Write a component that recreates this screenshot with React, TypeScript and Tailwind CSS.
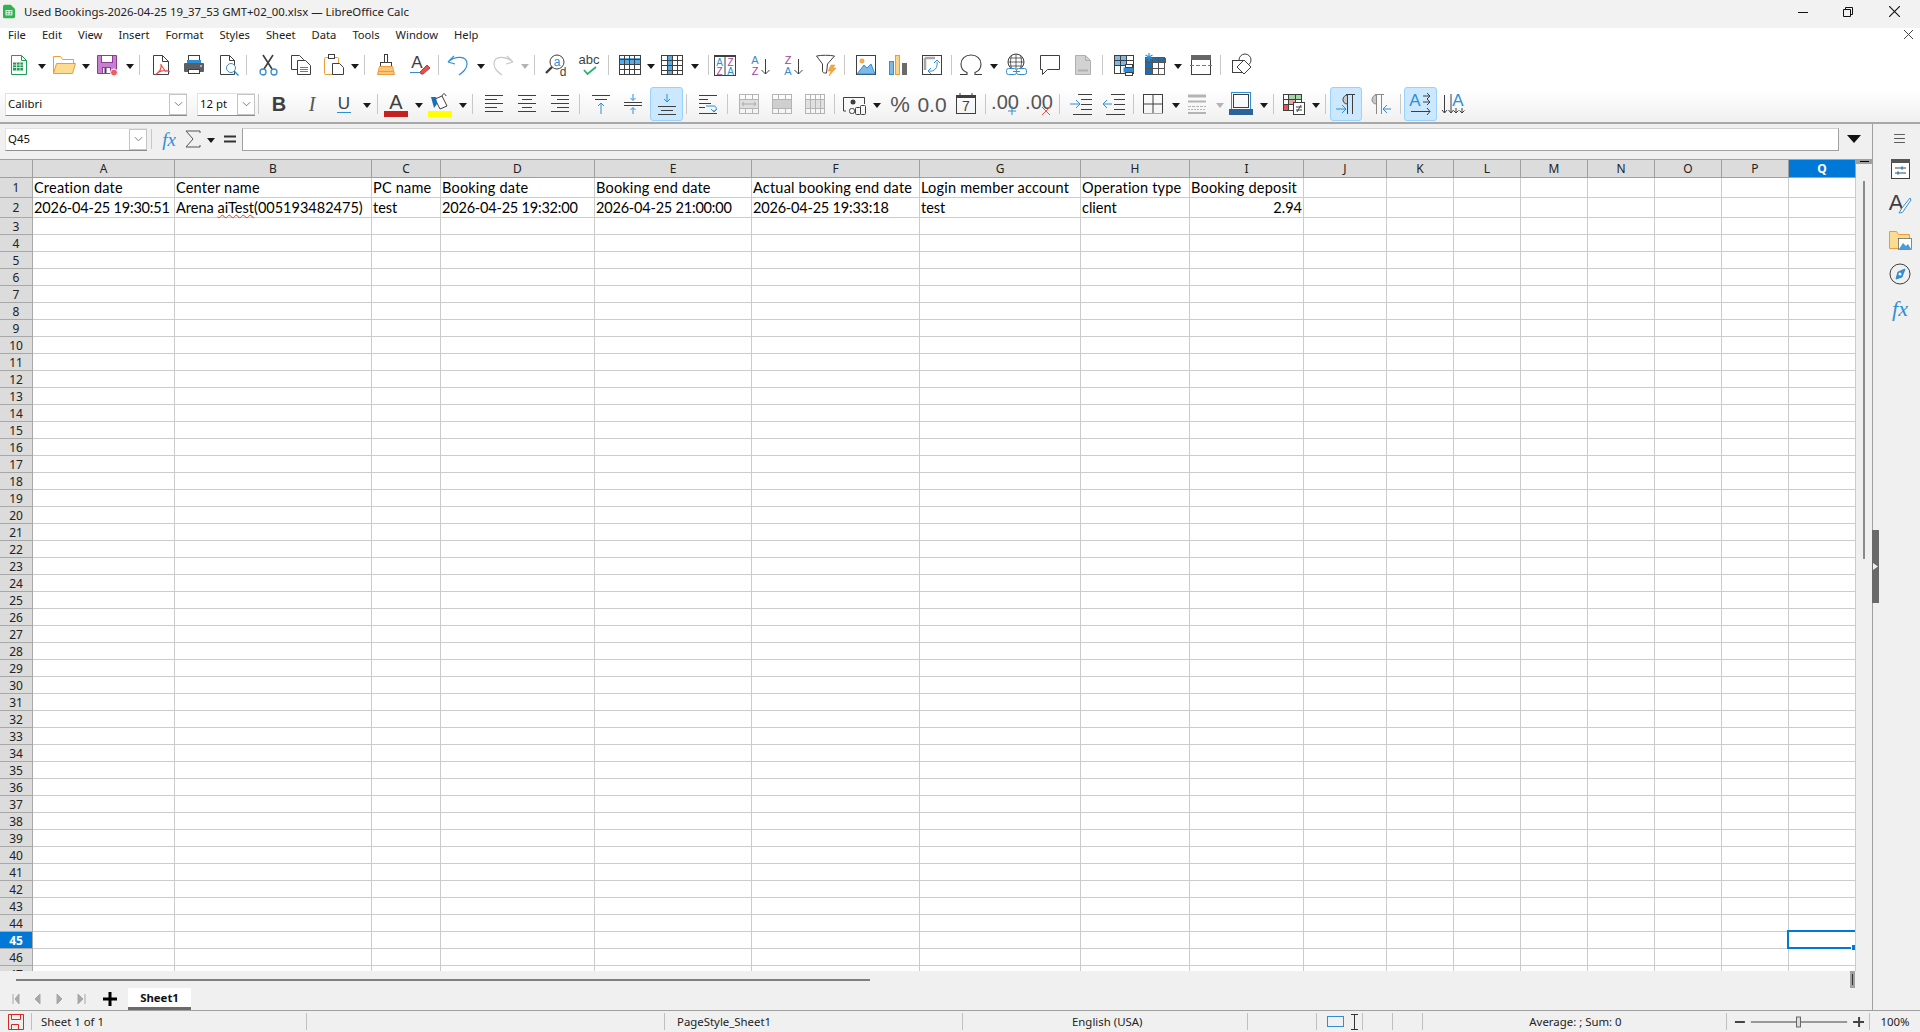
import React from "react";

const UI = "font-['Noto_Sans','Open_Sans',sans-serif]";
const COLS = ["A", "B", "C", "D", "E", "F", "G", "H", "I", "J", "K", "L", "M", "N", "O", "P", "Q"];
const BLUE = "#2f8fd6";
const DARK = "#3f3f3f";
const PURPLE = "#a53fa5";
const ORANGE = "#ee9b3a";
const LETTERS = "Liberation Sans, sans-serif";

const ROW1 = ["Creation date", "Center name", "PC name", "Booking date", "Booking end date", "Actual booking end date", "Login member account", "Operation type", "Booking deposit"];
const ROW2 = ["2026-04-25 19:30:51", "", "test", "2026-04-25 19:32:00", "2026-04-25 21:00:00", "2026-04-25 19:33:18", "test", "client", ""];

function Ic({ className = "", children }: { className?: string; children?: React.ReactNode }) {
  return (
    <svg viewBox="0 0 24 24" fill="none" stroke={DARK} className={"w-[24px] h-[24px] shrink-0 overflow-visible " + className}>
      {children}
    </svg>
  );
}

// little black arrow next to a tool button
function Dd({ className = "", off }: { className?: string; off?: boolean }) {
  return (
    <svg viewBox="0 0 8 5" className={"w-[8px] h-[5px] shrink-0 mt-[2px] " + className}>
      <path d="M0 0h8L4 5z" fill={off ? "#b4b4b4" : "#1a1a1a"} />
    </svg>
  );
}

function Sep({ className = "" }: { className?: string }) {
  return <div className={"w-[1px] h-[20px] bg-[#c8c8c8] shrink-0 " + className} />;
}

function L({ x, y, s = 9, c = DARK, w = 400, a = "middle", i }: { x: number; y: number; s?: number; c?: string; w?: number; a?: "middle" | "start"; i?: string; }) {
  return (
    <text x={x} y={y} fontSize={s} fill={c} stroke="none" fontWeight={w} textAnchor={a} fontFamily={LETTERS}>
      {i}
    </text>
  );
}

function Lines({ rows }: { rows: [number, number, number][] }) {
  return <path d={rows.map(([x1, x2, y]) => `M${x1} ${y}.5H${x2}`).join("")} />;
}

function Grid({ x = 1.5, y = 2.5, w = 21, h = 19, vs, hs, c = DARK }: { x?: number; y?: number; w?: number; h?: number; vs: number[]; hs: number[]; c?: string }) {
  return (
    <>
      <rect x={x} y={y} width={w} height={h} stroke={c} />
      <path d={vs.map((v) => `M${v} ${y}v${h}`).join("") + hs.map((v) => `M${x} ${v}h${w}`).join("")} stroke={c} />
    </>
  );
}

function ComboArrow() {
  return (
    <div className="w-[18px] h-full flex items-center justify-center bg-white border border-[#c4c4c4] shrink-0">
      <svg viewBox="0 0 10 6" className="w-[9px] h-[6px]">
        <path d="M1 1l4 4 4-4" fill="none" stroke="#707070" />
      </svg>
    </div>
  );
}

function Toolbar1() {
  return (
    <div className="h-[38px] flex items-center">
      <Ic className="ml-[7px]">
        <path d="M4.5 2.5h10l5 5v14h-15z" stroke="#1f9d55" fill="#fff" />
        <path d="M14.5 2.5v5h5" stroke="#1f9d55" />
        <rect x="6" y="9.5" width="10" height="8" fill="#1f9d55" stroke="none" />
        <path d="M6 12h10M6 14.5h10M9.5 9.5v8M13 9.5v8" stroke="#fff" strokeWidth=".7" />
      </Ic>
      <Dd className="ml-[7px]" />
      <Ic className="ml-[6px]">
        <path d="M1.5 20.5v-17h7l2 3h11v4" fill="#fff" stroke={ORANGE} />
        <path d="M1.5 20.5l3-10h19l-3 10z" fill="#fcdc90" stroke={ORANGE} />
      </Ic>
      <Dd className="ml-[6px]" />
      <Ic className="ml-[5px]">
        <path d="M2.5 2.5h19v18h-19z" fill="#c77fd0" stroke="#8d3c98" />
        <rect x="6.5" y="2.5" width="11" height="7" fill="#fff" stroke="#8d3c98" />
        <rect x="7.5" y="14.5" width="8" height="6" fill="#fff" stroke="#8d3c98" />
        <path d="M10.5 15v5" stroke="#5d2d64" strokeWidth="2" />
        <circle cx="19" cy="19.5" r="3.5" fill="#ef5f5f" stroke="#fff" />
      </Ic>
      <Dd className="ml-[7px]" />
      <Sep className="ml-[5px]" />
      <Ic className="ml-[9px]">
        <path d="M4.5 2.5h9l6 6v13h-15z" fill="#fff" />
        <path d="M13.5 2.5v6h6" />
        <path d="M12 11c1 5-1 8-6 11M10 19c4-2 7-2 11 0M12 12l5 7" stroke="#ea4a4a" strokeWidth="1.2" />
      </Ic>
      <Ic className="ml-[9px]">
        <rect x="6.5" y="2.5" width="11" height="7" fill="#fff" />
        <rect x="2" y="10" width="20" height="9" rx="1" fill="#5b5f63" stroke="none" />
        <rect x="5" y="7" width="14" height="3" fill={BLUE} stroke="none" />
        <rect x="6.5" y="16.5" width="11" height="4" fill="#fff" />
        <path d="M18 13h2" stroke="#fff" />
      </Ic>
      <Ic className="ml-[10px]">
        <path d="M4.5 2.5h9l5 5v14h-14z" fill="#fff" />
        <path d="M13.5 2.5v5h5" />
        <circle cx="15" cy="15" r="4.5" stroke={BLUE} fill="#fff" />
        <path d="M18.5 18.5l4 4" stroke={BLUE} strokeWidth="1.5" />
      </Ic>
      <Sep className="ml-[6px]" />
      <Ic className="ml-[9px]">
        <path d="M7 2l9 14M17 2L8 16" strokeWidth="1.6" />
        <circle cx="7" cy="19" r="3" stroke={BLUE} strokeWidth="1.3" />
        <circle cx="18" cy="19" r="3" stroke={BLUE} strokeWidth="1.3" />
      </Ic>
      <Ic className="ml-[9px]">
        <path d="M2.5 2.5h8l4 4v10h-12z" fill="#fff" />
        <path d="M8.5 7.5h8l5 5v9h-13z" fill="#fff" />
        <path d="M11 14.5h8M11 16.5h8M11 18.5h8" stroke={BLUE} />
      </Ic>
      <Ic className="ml-[9px]">
        <rect x="2.5" y="4.5" width="14" height="17" rx="1" stroke={ORANGE} />
        <rect x="6.5" y="1.5" width="6" height="4" fill="#fff" />
        <path d="M10.5 10.5h7l4 4v7h-11z" fill="#fff" />
      </Ic>
      <Dd className="ml-[5px]" />
      <Sep className="ml-[5px]" />
      <Ic className="ml-[9px]">
        <rect x="10.5" y="1.5" width="3" height="8" fill="#fff" />
        <rect x="6.5" y="9.5" width="11" height="4" fill="#fff" />
        <path d="M5.5 13.5h13l2 8h-17z" fill="#f9c678" stroke={ORANGE} />
        <path d="M4.5 18.5h15" stroke={ORANGE} />
      </Ic>
      <Ic className="ml-[9px]">
        <L x={10} y={15} s={17} i="A" />
        <path d="M3 19.5h10" stroke={BLUE} />
        <path d="M13 19l7-7 3 3-7 6h-2z" fill="#e8504a" stroke="#c73a36" />
      </Ic>
      <Sep className="ml-[7px]" />
      <Ic className="ml-[7px]">
        <path d="M2 9l6-6M2 9l7 2M2 9c7-6 19-7 19 2 0 5-4 8-8 11" stroke={BLUE} strokeWidth="1.2" />
      </Ic>
      <Dd className="ml-[7px]" />
      <Ic className="ml-[6px]">
        <path d="M22 9l-6-6M22 9l-7 2M22 9C15 3 3 2 3 11c0 5 4 8 8 11" stroke="#c8c8c8" strokeWidth="1.2" />
      </Ic>
      <Dd className="ml-[6px]" off />
      <Sep className="ml-[5px]" />
      <Ic className="ml-[9px]">
        <circle cx="13" cy="9" r="7" />
        <L x={13} y={13} s={12} c={BLUE} i="a" />
        <path d="M8 14l-6 6" strokeWidth="2.4" />
        <L x={19} y={23} s={12} i="d" />
      </Ic>
      <Ic className="ml-[9px]">
        <L x={12} y={11} s={13} i="abc" />
        <path d="M7 17l3.5 4L19 14" stroke="#27b36e" strokeWidth="1.8" />
      </Ic>
      <Sep className="ml-[7px]" />
      <Ic className="ml-[9px]">
        <rect x="2" y="5" width="21" height="6" fill="#5aa9e0" stroke="none" />
        <Grid x={1.5} y={2.5} w={21} h={19} vs={[6.5, 11.5, 16.5]} hs={[6.5, 11.5, 16.5]} />
      </Ic>
      <Dd className="ml-[5px]" />
      <Ic className="ml-[5px]">
        <rect x="7" y="3" width="6" height="18" fill="#5aa9e0" stroke="none" />
        <Grid x={1.5} y={2.5} w={21} h={19} vs={[7.5, 12.5, 17.5]} hs={[7.5, 12.5, 17.5]} />
      </Ic>
      <Dd className="ml-[7px]" />
      <Sep className="ml-[9px]" />
      <Ic className="ml-[4px]">
        <rect x="1.5" y="3.5" width="21" height="19" />
        <rect x="1" y="2" width="22" height="2" fill={DARK} stroke="none" />
        <path d="M12 4v18" />
        <L x={6.5} y={13} s={10} c={BLUE} i="A" />
        <L x={6.5} y={22} s={10} c={PURPLE} i="Z" />
        <L x={17.5} y={13} s={10} c={PURPLE} i="Z" />
        <L x={17.5} y={22} s={10} c={BLUE} i="A" />
      </Ic>
      <Ic className="ml-[11px]">
        <L x={7} y={11} s={11} c={BLUE} i="A" />
        <L x={7} y={22} s={11} c={PURPLE} i="Z" />
        <path d="M17.5 6v15M13.5 17l4 4 4-4" />
      </Ic>
      <Ic className="ml-[9px]">
        <L x={7} y={11} s={11} c={PURPLE} i="Z" />
        <L x={7} y={22} s={11} c={BLUE} i="A" />
        <path d="M17.5 6v15M13.5 17l4 4 4-4" />
      </Ic>
      <Ic className="ml-[9px]">
        <path d="M2.5 3c5-1 13-1 18 0l-7 8-1 9h-2c-1 0-2-1-2-2v-7z" />
        <path d="M17 12l-3 6h3l-2 5 7-8h-3l2-3z" fill="#f3a93c" stroke="#e98f2a" strokeWidth=".5" />
      </Ic>
      <Sep className="ml-[6px]" />
      <Ic className="ml-[9px]">
        <rect x="2.5" y="2.5" width="19" height="19" />
        <circle cx="8" cy="8" r="2" fill="#f6b458" stroke={ORANGE} />
        <path d="M3 21l7-9 3 3 4-4 4 10z" fill="#7db9e6" stroke={BLUE} />
      </Ic>
      <Ic className="ml-[8px]">
        <rect x="3.5" y="8.5" width="4" height="13" fill="#7db9e6" stroke={BLUE} />
        <rect x="9.5" y="2.5" width="4" height="19" fill="#fbd48a" stroke={ORANGE} />
        <rect x="16" y="10" width="5" height="12" fill="#6a6a6a" stroke="none" />
      </Ic>
      <Ic className="ml-[10px]">
        <rect x="2.5" y="2.5" width="19" height="19" />
        <path d="M5 5h10M5 5v12" stroke="#a8a8a8" strokeWidth="2.5" />
        <path d="M9 18c5 1 9-3 8-9M14 10l3-3 3 3M11 15l-3 3 3 3" stroke={BLUE} />
      </Ic>
      <Sep className="ml-[7px]" />
      <Ic className="ml-[7px]">
        <path d="M1 21.5h7v-2C4 18 2 15 2 11c0-5 4-9 10-9s10 4 10 9c0 4-2 7-6 8.500v2h7" strokeWidth="1.1" />
      </Ic>
      <Dd className="ml-[7px]" />
      <Ic className="ml-[7px]">
        <circle cx="11" cy="9" r="8" />
        <path d="M3 9h16M4.500 5h13M4.500 13h13M11 1v16M7 2c-2 4-2 10 0 14M15 2c2 4 2 10 0 14" strokeWidth=".8" />
        <rect x="1.500" y="15.500" width="10" height="6" rx="2" stroke={BLUE} fill="#fff" />
        <rect x="11.500" y="15.500" width="10" height="6" rx="2" stroke={BLUE} fill="#fff" />
        <path d="M8 18.500h7" stroke={BLUE} />
      </Ic>
      <Ic className="ml-[9px]">
        <path d="M2.500 2.500h19v14h-12l-5 5v-5h-2z" fill="#fff" />
      </Ic>
      <Ic className="ml-[9px]">
        <path d="M4.500 2.500h10l5 5v14h-15z" fill="#d2d2d2" stroke="#b0b0b0" />
        <path d="M14.500 2.500v5h5" stroke="#b0b0b0" />
        <path d="M7 17.500h10" stroke="#b0b0b0" strokeWidth="2" />
      </Ic>
      <Sep className="ml-[7px]" />
      <Ic className="ml-[9px]">
        <rect x="3" y="3" width="11" height="10" fill="#7db9e6" stroke="none" />
        <Grid x={2.500} y={2.500} w={19} h={18} vs={[8.500, 14.500]} hs={[7.500, 12.500]} />
        <rect x="11.500" y="14.500" width="10" height="5" fill="#2f8fd6" stroke="none" />
        <rect x="13.500" y="11.500" width="7" height="3" fill="#fff" />
        <rect x="13.500" y="19.500" width="7" height="3" fill="#fff" />
      </Ic>
      <Ic className="ml-[7px]">
        <rect x="2" y="4" width="21" height="18" fill="#fff" stroke="none" />
        <rect x="2" y="5" width="8" height="17" fill="#1a6eb5" stroke="none" />
        <rect x="2" y="5" width="21" height="5" fill="#1a6eb5" stroke="none" />
        <Grid x={2.500} y={4.500} w={19} h={17} vs={[9.500, 15.500]} hs={[9.500, 15.500]} c="#555" />
        <path d="M6 0v8M2.500 2l7 4M9.500 2l-7 4" stroke="#2f8fd6" strokeWidth="1.200" />
      </Ic>
      <Dd className="ml-[7px]" />
      <Ic className="ml-[7px]">
        <rect x="2.500" y="2.500" width="19" height="19" />
        <rect x="2" y="2" width="20" height="5" fill="#666" stroke="none" />
        <path d="M1 12.500h22" stroke={BLUE} strokeDasharray="4 2" />
      </Ic>
      <Sep className="ml-[7px]" />
      <Ic className="ml-[9px]">
        <circle cx="15" cy="7" r="6" />
        <rect x="2.500" y="7.500" width="12" height="12" fill="#fff" />
        <path d="M14 7l7 7-7 7-7-7z" fill="#fff" />
      </Ic>
    </div>
  );
}

function Hl({ className = "", children }: { className?: string; children?: React.ReactNode }) {
  return (
    <div className={"h-[34px] flex items-center justify-center bg-[#cce8ff] border border-[#99d1ff] rounded-[3px] shrink-0 " + className}>
      {children}
    </div>
  );
}

function Toolbar2() {
  return (
    <div className="h-[38px] pt-[2px] flex items-center">
      <div className="ml-[5px] w-[182px] h-[23px] flex items-center bg-white border-t border-l border-[#e2e2e2] border-b-[#8c8c8c] border-b shrink-0">
        <span className={"flex-1 pl-[2px] text-[11.4px] text-[#111] " + UI}>Calibri</span>
        <ComboArrow />
      </div>
      <div className="ml-[10px] w-[58px] h-[23px] flex items-center bg-white border-t border-l border-[#e2e2e2] border-b-[#8c8c8c] border-b shrink-0">
        <span className={"flex-1 pl-[2px] text-[11.4px] text-[#111] " + UI}>12 pt</span>
        <ComboArrow />
      </div>
      <Sep className="ml-[3px]" />
      <Ic className="ml-[8px]">
        <L x={12} y={19} s={20} w={700} i="B" />
      </Ic>
      <Ic className="ml-[9px]">
        <text x="12" y="19" fontSize="20" fontStyle="italic" textAnchor="middle" fill="#555" stroke="none" fontFamily="Liberation Serif, serif">I</text>
      </Ic>
      <Ic className="ml-[8px]">
        <L x={12} y={17} s={17} i="U" />
        <path d="M5 20.500h14" stroke={BLUE} />
      </Ic>
      <Dd className="ml-[7px]" />
      <Sep className="ml-[6px]" />
      <Ic className="ml-[6px]">
        <L x={12} y={17} s={20} i="A" />
        <rect x="0" y="19" width="24" height="6" fill="#c8201f" stroke="none" />
      </Ic>
      <Dd className="ml-[7px]" />
      <Ic className="ml-[5px]">
        <path d="M7 7l7-3 5 10-7 3z" fill="#fff" />
        <path d="M3 5h5l1 7-3 4z" fill="#1a6eb5" stroke="none" />
        <path d="M14 4c1-3 3-3 4 0" />
        <rect x="0" y="19" width="24" height="6" fill="#ffff00" stroke="none" />
      </Ic>
      <Dd className="ml-[7px]" />
      <Sep className="ml-[5px]" />
      <Ic className="ml-[9px]">
        <Lines rows={[[3, 21, 3], [3, 15, 7], [3, 21, 11], [3, 15, 15], [3, 21, 19]]} />
      </Ic>
      <Ic className="ml-[9px]">
        <Lines rows={[[3, 21, 3], [7, 17, 7], [3, 21, 11], [7, 17, 15], [3, 21, 19]]} />
      </Ic>
      <Ic className="ml-[9px]">
        <Lines rows={[[3, 21, 3], [9, 21, 7], [3, 21, 11], [9, 21, 15], [3, 21, 19]]} />
      </Ic>
      <Sep className="ml-[7px]" />
      <Ic className="ml-[9px]">
        <Lines rows={[[3, 21, 3], [6, 18, 7]]} />
        <path d="M12 22V11M9 14l3-3 3 3" stroke={BLUE} />
      </Ic>
      <Ic className="ml-[8px]">
        <Lines rows={[[3, 21, 10], [3, 21, 13]]} />
        <path d="M12 2v6M9.500 6l2.500 2.500L14.500 6M12 22v-6M9.500 18l2.500-2.500 2.500 2.500" stroke={BLUE} />
      </Ic>
      <Hl className="ml-[5px] w-[33px]">
        <Ic>
          <path d="M12 2v8M9 7l3 3 3-3" stroke={BLUE} />
          <Lines rows={[[3, 21, 14], [6, 18, 18], [3, 21, 22]]} />
        </Ic>
      </Hl>
      <Sep className="ml-[3px]" />
      <Ic className="ml-[9px]">
        <Lines rows={[[3, 21, 3], [3, 12, 7], [3, 15, 11], [3, 9, 15], [3, 21, 21]]} />
        <path d="M10 14h8c3 0 3 5 0 5h-1M15 17l3 3 3-3" stroke={BLUE} />
      </Ic>
      <Sep className="ml-[7px]" />
      <Ic className="ml-[9px]">
        <Grid x={2.500} y={2.500} w={19} h={19} vs={[8.500, 15.500]} hs={[7.500, 16.500]} c="#b4b4b4" />
        <rect x="3" y="8" width="18" height="8" fill="#dedede" stroke="none" />
        <path d="M5 12h14M5 12l2-2M5 12l2 2M19 12l-2-2M19 12l-2 2" stroke="#aaa" />
      </Ic>
      <Ic className="ml-[9px]">
        <Grid x={2.500} y={2.500} w={19} h={19} vs={[8.500, 15.500]} hs={[7.500, 16.500]} c="#b4b4b4" />
        <rect x="3" y="8" width="18" height="8" fill="#cfcfcf" stroke="none" />
      </Ic>
      <Ic className="ml-[9px]">
        <rect x="3" y="8" width="18" height="8" fill="#e0e0e0" stroke="none" />
        <Grid x={2.500} y={2.500} w={19} h={19} vs={[7.500, 12.500, 17.500]} hs={[7.500, 16.500]} c="#b4b4b4" />
      </Ic>
      <Sep className="ml-[7px]" />
      <Ic className="ml-[7px]">
        <path d="M4 19H1.500V5.500h21V12" />
        <circle cx="11" cy="10" r="2.500" fill={DARK} stroke="none" />
        <rect x="7.500" y="16.500" width="5" height="5" rx="2" />
        <rect x="13.500" y="15.500" width="5" height="7" rx="1" />
        <rect x="18.500" y="13.500" width="5" height="9" rx="1" />
      </Ic>
      <Dd className="ml-[7px]" />
      <Ic className="ml-[7px]">
        <L x={12} y={20} s={22} c="#555" i="%" />
      </Ic>
      <Ic className="ml-[8px]">
        <L x={12} y={20} s={21} c="#555" i="0.0" />
      </Ic>
      <Ic className="ml-[10px]">
        <rect x="2.500" y="3.500" width="19" height="18" />
        <rect x="2" y="3" width="20" height="3" fill={DARK} stroke="none" />
        <path d="M6 1v3M18 1v3" />
        <L x={12} y={19} s={14} i="7" />
      </Ic>
      <Sep className="ml-[7px]" />
      <Ic className="ml-[8px]">
        <L x={11} y={17} s={20} c="#555" i=".00" />
        <path d="M18 14v9M14 19h8" stroke={BLUE} />
      </Ic>
      <Ic className="ml-[10px]">
        <L x={11} y={17} s={20} c="#555" i=".00" />
        <path d="M14 15l8 8M22 15l-8 8" stroke="#f05050" />
      </Ic>
      <Sep className="ml-[7px]" />
      <Ic className="ml-[9px]">
        <Lines rows={[[9, 23, 2], [12, 23, 7], [12, 23, 12], [12, 23, 17], [4, 23, 22]]} />
        <path d="M1 12h9M7 8l4 4-4 4" stroke={BLUE} />
      </Ic>
      <Ic className="ml-[9px]">
        <Lines rows={[[9, 23, 2], [12, 23, 7], [12, 23, 12], [12, 23, 17], [4, 23, 22]]} />
        <path d="M10 12H1M5 8l-4 4 4 4" stroke={BLUE} />
      </Ic>
      <Sep className="ml-[7px]" />
      <Ic className="ml-[7px]">
        <rect x="2.500" y="2.500" width="19" height="19" />
        <path d="M12 2.500v19M2.500 12h19" />
        <path d="M2 21.500h20" stroke={ORANGE} />
      </Ic>
      <Dd className="ml-[7px]" />
      <Ic className="ml-[5px]">
        <path d="M3 4h18" stroke="#b4b4b4" strokeWidth="3" />
        <path d="M3 9.500h18" stroke="#b4b4b4" strokeWidth="2" />
        <path d="M3 14.500h18" stroke="#b4b4b4" strokeDasharray="3 1" />
        <path d="M3 17.500h18" stroke="#b4b4b4" strokeDasharray="2 1" />
        <path d="M3 21h18" stroke="#b4b4b4" strokeWidth="2" />
      </Ic>
      <Dd className="ml-[7px]" off />
      <Ic className="ml-[5px]">
        <rect x="2.500" y="0.500" width="19" height="17" stroke={BLUE} />
        <rect x="4.500" y="2.500" width="15" height="13" />
        <rect x="0" y="17" width="24" height="6" fill="#2b6299" stroke="none" />
      </Ic>
      <Dd className="ml-[7px]" />
      <Sep className="ml-[5px]" />
      <Ic className="ml-[8px]">
        <rect x="6" y="2" width="13" height="5" fill="#9fd8a5" stroke="none" />
        <rect x="6" y="7" width="8" height="5" fill="#f1a0a0" stroke="none" />
        <rect x="2" y="12" width="5" height="6" fill="#f05050" stroke="none" />
        <Grid x={1.500} y={2.500} w={18} h={16} vs={[6.500, 13.500]} hs={[7.500, 12.500]} />
        <rect x="11.500" y="10.500" width="11" height="12" fill="#fff" />
        <path d="M14 15h6M14 18h6M19 13l-4 7" />
      </Ic>
      <Dd className="ml-[6px]" />
      <Sep className="ml-[5px]" />
      <Hl className="ml-[4px] w-[32px]">
        <Ic>
          <path d="M13.500 3C8 3 7 12 13.500 12z" fill="#c8c8c8" />
          <path d="M13.500 2v20M18.500 2v20M12 2.500h9" />
          <path d="M2 17h9M8 13l4 4-4 4" stroke={BLUE} />
        </Ic>
      </Hl>
      <Ic className="ml-[6px]">
        <path d="M8.500 3C3 3 2 12 8.500 12z" fill="#c8c8c8" stroke="#888" />
        <path d="M8.500 2v20M13.500 2v20M7 2.500h9" stroke="#888" />
        <path d="M23 17h-8M19 13l-4 4 4 4" stroke={BLUE} />
      </Ic>
      <Sep className="ml-[8px]" />
      <Hl className="ml-[3px] w-[33px]">
        <Ic>
          <L x={6} y={14} s={17} c={BLUE} i="A" />
          <path d="M14 4h7M18 1l3 3-3 3M14 10h7M18 7l3 3-3 3M2 19.500h19M18 16l3 3.500-3 3.500" />
        </Ic>
      </Hl>
      <Ic className="ml-[4px]">
        <L x={17} y={14} s={17} c={BLUE} i="A" />
        <path d="M3.500 3v18M1 18l2.500 3L6 18M10 2v19M7.500 18l2.500 3 2.500-3M15 16v5M12.500 18.500l2.500 2.500 2.500-2.500M21 16v5M18.500 18.500L21 21l2.500-2.500" />
      </Ic>
    </div>
  );
}

function FormulaBar() {
  return (
    <div className="h-[35px] pb-[5px] flex items-center bg-[#f0f0f0] shrink-0">
      <div className="ml-[5px] w-[142px] h-[23px] flex items-center bg-white border-t border-l border-[#e2e2e2] border-b-[#8c8c8c] border-b shrink-0">
        <span className={"flex-1 pl-[2px] text-[11.4px] text-[#111] " + UI}>Q45</span>
        <ComboArrow />
      </div>
      <Sep className="ml-[4px]" />
      <svg viewBox="0 0 24 24" className="ml-[5px] w-[24px] h-[24px] shrink-0">
        <text x="12" y="19" fontSize="19" fontStyle="italic" textAnchor="middle" fill={BLUE} fontFamily="Liberation Serif, serif">fx</text>
      </svg>
      <svg viewBox="0 0 20 20" className="ml-[2px] w-[20px] h-[20px] shrink-0">
        <path d="M17 4V2H3l7 8-7 8h14v-2" fill="none" stroke="#555" />
      </svg>
      <Dd className="ml-[4px]" />
      <svg viewBox="0 0 14 10" className="ml-[8px] w-[14px] h-[10px] shrink-0">
        <path d="M1 2.500h12M1 7.500h12" stroke="#333" strokeWidth="2" />
      </svg>
      <div className="ml-[5px] w-[1597px] h-[23px] bg-white border border-[#a0a0a0] border-t-[#d0d0d0] shrink-0" />
      <svg viewBox="0 0 14 8" className="ml-[8px] w-[14px] h-[8px] shrink-0">
        <path d="M0 0h14L7 8z" fill="#111" />
      </svg>
    </div>
  );
}

function Sheet() {
  const rows = Array.from({ length: 47 }, (_, i) => i + 1);
  return (
    <div className="flex-1 flex min-h-0">
      <div className="w-[1856px] overflow-hidden bg-white shrink-0">
        <div className="grid grid-cols-[33px_142px_197px_69px_154px_157px_168px_161px_109px_114px_83px_67px_67px_67px_67px_67px_67px_67px] font-['Lato','Noto_Sans',sans-serif] text-[14.5px] text-black">
          <div className="h-[19px] bg-[#dcdcdc] border-t border-r border-b border-[#a0a0a0]" />
          {COLS.map((c) => (
            <div
              key={c}
              className={
                "h-[19px] flex items-center justify-center text-[12px] border-t border-r border-b border-[#a0a0a0] " +
                UI +
                (c === "Q" ? " bg-[#0078d7] text-white font-bold" : " bg-[#dcdcdc] text-[#222]")
              }
            >
              {c}
            </div>
          ))}
          {rows.map((r) => (
            <React.Fragment key={r}>
              <div
                className={
                  "pt-[1px] flex items-center justify-center text-[12px] border-r border-b border-[#a8a8a8] " +
                  UI +
                  (r < 3 ? " h-[20px]" : " h-[17px]") +
                  (r === 45 ? " bg-[#0078d7] text-white font-bold" : " bg-[#dcdcdc] text-[#222]")
                }
              >
                {r}
              </div>
              {COLS.map((c, i) => {
                const head = ROW1[i] ?? "";
                const val = ROW2[i] ?? "";
                let content: React.ReactNode = null;
                if (r === 1 && head) content = <span className="tracking-[0.2px]">{head}</span>;
                if (r === 2 && val) content = <span className={val.length > 10 ? "tracking-[-0.2px]" : ""}>{val}</span>;
                if (r === 2 && c === "B")
                  content = (
                    <span>
                      Arena <span className="underline decoration-wavy decoration-[#e0392f] decoration-1">aiTest</span>(005193482475)
                    </span>
                  );
                if (r === 2 && c === "I") content = "2.94";
                return (
                  <div
                    key={c}
                    className={
                      "relative flex items-center px-[1px] whitespace-nowrap border-r border-b border-[#cccccc]" +
                      (r < 3 ? " h-[20px]" : " h-[17px]") +
                      (r === 2 && c === "I" ? " justify-end" : "")
                    }
                  >
                    {content}
                    {r === 45 && c === "Q" && (
                      <>
                        <div className="absolute -left-[2px] -top-[2px] -bottom-[1px] right-0 z-10 border-2 border-r-0 border-[#0078d7]" />
                        <div className="absolute right-0 -bottom-[2px] z-10 w-[4px] h-[5px] bg-[#0078d7] border-l border-white" />
                      </>
                    )}
                  </div>
                );
              })}
            </React.Fragment>
          ))}
        </div>
      </div>
      <div className="flex-1 relative bg-[#f0f0f0]">
        <div className="h-[5px] bg-[#a0a0a0] flex justify-center items-center">
          <div className="w-[9px] h-[1px] bg-black" />
        </div>
        <div className="ml-[7px] mt-[17px] w-[2px] h-[378px] bg-[#8a8a8a]" />
      </div>
    </div>
  );
}

function TabBar() {
  return (
    <div className="h-[39px] bg-[#f0f0f0] flex flex-col shrink-0">
      <div className="h-[17px] flex items-start relative">
        <div className="ml-[16px] mt-[8px] w-[854px] h-[2px] bg-[#808080]" />
        <div className="absolute left-[1850px] top-0 w-[5px] h-[17px] bg-[#a0a0a0] flex justify-center">
          <div className="w-[1px] h-[11px] mt-[3px] bg-[#333]" />
        </div>
      </div>
      <div className="h-[22px] flex items-center">
        <svg viewBox="0 0 80 12" className="ml-[12px] w-[80px] h-[12px] shrink-0">
          <path d="M1 1v10M7 1L3 6l4 5zM28 1l-5 5 5 5zM45 1l5 5-5 5zM66 1l5 5-5 5zM73 1v10" fill="#a8a8a8" stroke="#a8a8a8" />
        </svg>
        <svg viewBox="0 0 14 14" className="ml-[11px] w-[14px] h-[14px] shrink-0">
          <path d="M7 0v14M0 7h14" stroke="#000" strokeWidth="3" />
        </svg>
        <div className={"ml-[11px] w-[63px] h-[22px] bg-white border-b-[3px] border-[#6b6b6b] flex items-center justify-center text-[11.4px] font-bold text-[#111] " + UI}>
          Sheet1
        </div>
      </div>
    </div>
  );
}

function StatusBar() {
  return (
    <div className={"h-[22px] bg-[#f0f0f0] border-t border-[#a0a0a0] flex items-center text-[11.4px] text-[#222] shrink-0 " + UI}>
      <div className="w-[32px] h-[17px] flex items-center justify-center border-r border-[#c0c0c0] shrink-0">
        <svg viewBox="0 0 16 16" className="w-[16px] h-[16px]" fill="none" stroke="#d8281f">
          <path d="M.5.500h15v15H.5z" />
          <path d="M3.500.500v5h9v-5M3.500 15.500v-5h7v5" />
        </svg>
      </div>
      <div className="w-[275px] h-[17px] pl-[9px] flex items-center border-r border-[#c0c0c0] shrink-0">Sheet 1 of 1</div>
      <div className="w-[358px] h-[17px] border-r border-[#c0c0c0] shrink-0" />
      <div className="w-[298px] h-[17px] pl-[12px] flex items-center border-r border-[#c0c0c0] shrink-0">PageStyle_Sheet1</div>
      <div className="w-[285px] h-[17px] pl-[109px] flex items-center border-r border-[#c0c0c0] shrink-0">English (USA)</div>
      <div className="w-[69px] h-[17px] border-r border-[#c0c0c0] shrink-0" />
      <div className="w-[46px] h-[17px] flex items-center pl-[10px] gap-[7px] border-r border-[#c0c0c0] shrink-0">
        <div className="w-[17px] h-[11px] border border-[#2f8fd6]" />
        <svg viewBox="0 0 7 16" className="w-[7px] h-[16px]" fill="none" stroke="#333">
          <path d="M0 .500h7M0 15.500h7M3.500 .500v15" />
        </svg>
      </div>
      <div className="w-[30px] h-[17px] border-r border-[#c0c0c0] shrink-0" />
      <div className="w-[30px] h-[17px] border-r border-[#c0c0c0] shrink-0" />
      <div className="w-[304px] h-[17px] pl-[2px] flex items-center justify-center border-r border-[#c0c0c0] shrink-0">Average: ; Sum: 0</div>
      <div className="w-[143px] h-[17px] flex items-center border-r border-[#c0c0c0] shrink-0">
        <svg viewBox="0 0 143 16" className="w-[143px] h-[16px]">
          <path d="M8 8h10M133 3v10M127 8h11" stroke="#444" strokeWidth="2" />
          <path d="M24 8h97" stroke="#999" strokeWidth="2" />
          <rect x="70" y="3" width="4" height="10" fill="#ddd" stroke="#666" />
        </svg>
      </div>
      <div className="flex-1 text-center">100%</div>
    </div>
  );
}

function Sidebar() {
  return (
    <div className="relative flex-1 pl-[6px] bg-[#f0f0f0] border-l border-[#a0a0a0] flex flex-col items-center">
      <svg viewBox="0 0 12 10" className="mt-[10px] w-[11px] h-[9px] shrink-0" stroke="#444">
        <path d="M0 .500h12M0 5h12M0 9.500h12" />
      </svg>
      <Ic className="mt-[14px]">
        <rect x="3.500" y="2.500" width="18" height="19" fill="#fff" />
        <rect x="3" y="2" width="19" height="4" fill="#555" stroke="none" />
        <path d="M7 11h11M7 16h11" stroke="#444" />
        <rect x="13" y="9.500" width="2" height="3" fill={BLUE} stroke="none" />
        <rect x="9" y="14.500" width="2" height="3" fill={BLUE} stroke="none" />
      </Ic>
      <Ic className="mt-[11px]">
        <L x={8} y={18} s={22} i="A" />
        <path d="M22 6l-8 10-3 5c2 0 5-1 5-3l7-10z" fill="#fff" stroke={BLUE} />
      </Ic>
      <Ic className="mt-[12px]">
        <path d="M1.500 20.500v-17h7l2 3h11v14z" fill="#fbdc90" stroke={ORANGE} />
        <rect x="10.500" y="10.500" width="13" height="11" fill="#fff" stroke={DARK} strokeWidth=".6" />
        <path d="M11 21l4-6 3 3 2-2 3 5z" fill="#4d9cd8" stroke="none" />
      </Ic>
      <Ic className="mt-[10px]">
        <circle cx="12" cy="12" r="10" />
        <path d="M17 7l-3 8-6 2 2-7z" fill={BLUE} stroke={BLUE} />
        <circle cx="12" cy="12" r="1.500" fill="#fff" stroke="none" />
      </Ic>
      <svg viewBox="0 0 24 24" className="mt-[11px] w-[24px] h-[24px] shrink-0">
        <text x="12" y="19" fontSize="22" fontStyle="italic" textAnchor="middle" fill={BLUE} fontFamily="Liberation Serif, serif">fx</text>
      </svg>
      <div className="absolute left-[-1px] top-[406px] w-[7px] h-[73px] bg-[#696969] flex items-center">
        <svg viewBox="0 0 5 7" className="w-[5px] h-[7px] ml-[1px]">
          <path d="M0 0l5 3.500L0 7z" fill="#eee" />
        </svg>
      </div>
    </div>
  );
}

export default function App() {
  return (
    <div className={"h-screen w-[1920px] flex flex-col overflow-hidden bg-white " + UI}>
      <div className="h-[28px] pb-[5px] bg-[#f2f2f2] flex items-center shrink-0">
        <svg viewBox="0 0 14 16" className="ml-[3px] w-[12px] h-[15px] shrink-0">
          <path d="M0 2a2 2 0 012-2h7l5 5v9a2 2 0 01-2 2H2a2 2 0 01-2-2z" fill="#2fb34f" />
          <rect x="3.500" y="7" width="7" height="5" fill="none" stroke="#fff" />
          <path d="M7 7v5M3.500 9.500h7" stroke="#fff" />
        </svg>
        <span className="ml-[9px] text-[11.4px] text-[#222]">Used Bookings-2026-04-25 19_37_53 GMT+02_00.xlsx — LibreOffice Calc</span>
        <div className="flex-1" />
        <svg viewBox="0 0 10 10" className="w-[10px] h-[10px] mr-[35px] shrink-0" stroke="#111" fill="none">
          <path d="M0 5.500h10" />
        </svg>
        <svg viewBox="0 0 10 10" className="w-[10px] h-[10px] mr-[36px] shrink-0" stroke="#111" fill="none">
          <path d="M.5 2.500h7v7h-7zM2.500 2.500v-2h7v7h-2" />
        </svg>
        <svg viewBox="0 0 10 10" className="w-[11px] h-[11px] mr-[20px] shrink-0" stroke="#111" fill="none">
          <path d="M0 0l10 10M10 0L0 10" />
        </svg>
      </div>
      <div className="bg-[linear-gradient(#ffffff_65%,#f0f0f0)] border-b-2 border-[#a8a8a8] shrink-0 h-[96px]">
        <div className="h-[18px] pb-[4px] flex items-center relative">
          <div className="flex gap-[16px] pl-[8px] text-[11.2px] text-[#222]">
            <span>File</span>
            <span>Edit</span>
            <span>View</span>
            <span>Insert</span>
            <span>Format</span>
            <span>Styles</span>
            <span>Sheet</span>
            <span>Data</span>
            <span>Tools</span>
            <span>Window</span>
            <span>Help</span>
          </div>
          <svg viewBox="0 0 9 9" className="absolute left-[1904px] top-[2px] w-[9px] h-[9px]" stroke="#444" fill="none">
            <path d="M0 0l9 9M9 0L0 9" />
          </svg>
        </div>
        <Toolbar1 />
        <Toolbar2 />
      </div>
      <div className="flex-1 flex min-h-0">
        <div className="w-[1872px] flex flex-col shrink-0">
          <FormulaBar />
          <Sheet />
          <TabBar />
        </div>
        <Sidebar />
      </div>
      <StatusBar />
    </div>
  );
}
